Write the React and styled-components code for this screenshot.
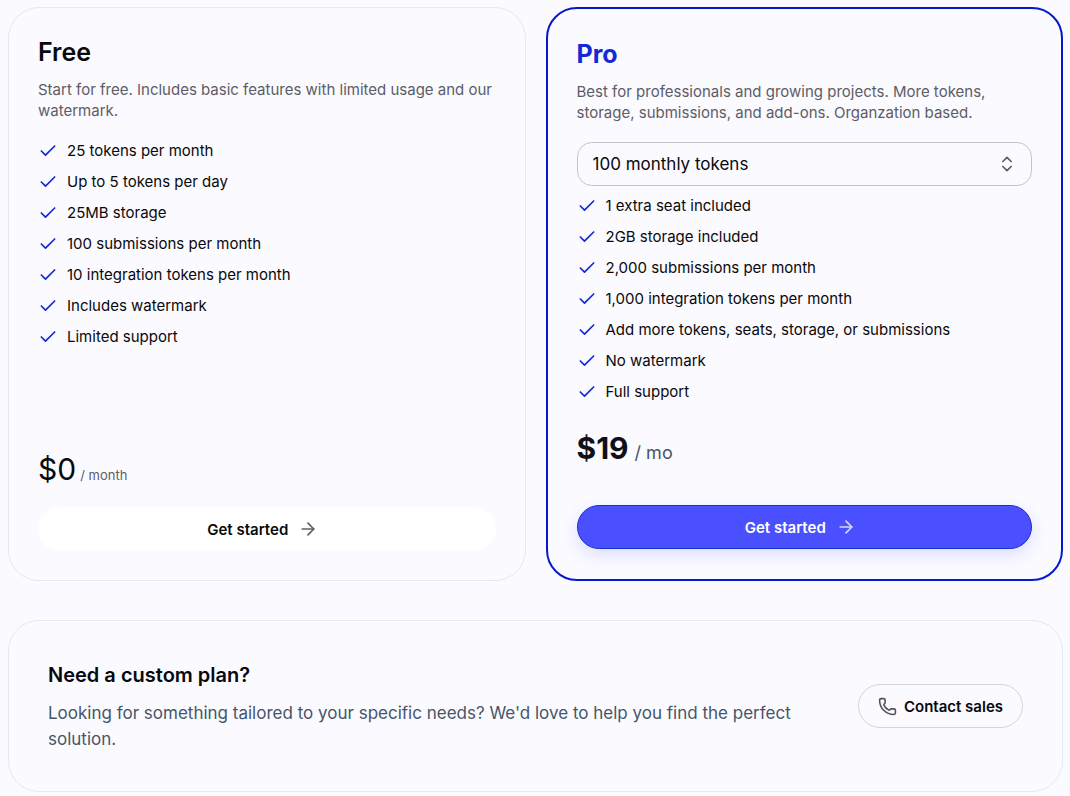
import React, { useState } from "react";
import styled, { createGlobalStyle, css } from "styled-components";
import { ArrowRight, Check, ChevronsUpDown, Phone } from "lucide-react";

const freeFeatures = [
  "25 tokens per month",
  "Up to 5 tokens per day",
  "25MB storage",
  "100 submissions per month",
  "10 integration tokens per month",
  "Includes watermark",
  "Limited support",
];

const proFeatures = [
  "1 extra seat included",
  "2GB storage included",
  "2,000 submissions per month",
  "1,000 integration tokens per month",
  "Add more tokens, seats, storage, or submissions",
  "No watermark",
  "Full support",
];

const FeatureList = ({ items }) => (
  <Features>
    {items.map((item) => (
      <Feature key={item}>
        <Check size={20} strokeWidth={2} />
        {item}
      </Feature>
    ))}
  </Features>
);

const App = () => {
  const [tokens, setTokens] = useState("100");

  return (
    <>
      <GlobalStyle />
      <Page>
        <Plans>
          <Card>
            <PlanName>Free</PlanName>
            <Description>
              Start for free. Includes basic features with limited usage and our
              watermark.
            </Description>
            <FeatureList items={freeFeatures} />
            <Price>
              <span>$0</span>
              <Period>/ month</Period>
            </Price>
            <PlanButton>
              Get started <ArrowRight size={20} strokeWidth={2} />
            </PlanButton>
          </Card>

          <Card $pro>
            <PlanName $pro>Pro</PlanName>
            <Description>
              Best for professionals and growing projects. More tokens, storage,
              submissions, and add-ons. Organzation based.
            </Description>
            <SelectWrapper>
              <Select
                aria-label="Monthly tokens"
                value={tokens}
                onChange={(e) => setTokens(e.target.value)}
              >
                <option value="100">100 monthly tokens</option>
              </Select>
              <ChevronsUpDown size={20} strokeWidth={2} />
            </SelectWrapper>
            <FeatureList items={proFeatures} />
            <Price $pro>
              <span>$19</span>
              <Period $pro>/ mo</Period>
            </Price>
            <PlanButton $pro>
              Get started <ArrowRight size={20} strokeWidth={2} />
            </PlanButton>
          </Card>
        </Plans>

        <CustomPlan>
          <CustomText>
            <CustomTitle>Need a custom plan?</CustomTitle>
            <CustomCopy>
              Looking for something tailored to your specific needs? We'd love
              to help you find the perfect solution.
            </CustomCopy>
          </CustomText>
          <ContactButton>
            <Phone size={19} strokeWidth={2} />
            Contact sales
          </ContactButton>
        </CustomPlan>
      </Page>
    </>
  );
};

export default App;

const GlobalStyle = createGlobalStyle`
  * {
    box-sizing: border-box;
  }
  body {
    margin: 0;
    background: #fafaff;
    color: #09090b;
    font-family: Inter, "Liberation Sans", sans-serif;
  }
`;

const Page = styled.main`
  padding: 7px 7px 5px 8px;
`;

const Plans = styled.div`
  display: grid;
  grid-template-columns: repeat(2, minmax(0, 1fr));
  gap: 20px;
`;

const Card = styled.section`
  display: flex;
  flex-direction: column;
  min-height: 574px;
  padding: 29px;
  border: 1px solid #e3e9f0;
  border-radius: 31px;

  ${({ $pro }) =>
    $pro &&
    css`
      padding: 30px 29px;
      border: 2px solid #0419cc;
    `}
`;

const PlanName = styled.h2`
  margin: 0 0 11px;
  font-size: 25px;
  line-height: 31px;
  font-weight: ${({ $pro }) => ($pro ? 700 : 600)};
  color: ${({ $pro }) => ($pro ? "#1527d6" : "#09090b")};
`;

const Description = styled.p`
  margin: 0 0 19px;
  font-size: 15px;
  line-height: 21px;
  color: #5c5d66;
`;

const Features = styled.ul`
  display: flex;
  flex-direction: column;
  gap: 10px;
  margin: 0 0 auto;
  padding: 0;
  list-style: none;
`;

const Feature = styled.li`
  display: flex;
  align-items: center;
  gap: 9px;
  font-size: 15px;
  line-height: 21px;

  svg {
    color: #1527d6;
  }
`;

const SelectWrapper = styled.div`
  position: relative;
  margin-bottom: 9px;

  svg {
    position: absolute;
    top: 12px;
    right: 15px;
    color: #5c5d66;
    pointer-events: none;
  }
`;

const Select = styled.select`
  appearance: none;
  display: block;
  width: 100%;
  height: 44px;
  padding: 0 40px 0 15px;
  border: 1px solid #c4c4cc;
  border-radius: 15px;
  background: transparent;
  color: #09090b;
  font-family: inherit;
  font-size: 17px;
`;

const Price = styled.p`
  display: flex;
  align-items: baseline;
  gap: 4px;
  margin: 0 0 14px;
  font-size: 30px;
  line-height: 36px;
  font-weight: 400;

  ${({ $pro }) =>
    $pro &&
    css`
      gap: 6px;
      margin-bottom: 34px;
      font-weight: 700;
      color: #101018;
    `}
`;

const Period = styled.span`
  font-size: ${({ $pro }) => ($pro ? "18px" : "13px")};
  font-weight: 400;
  color: ${({ $pro }) => ($pro ? "#475569" : "#5c5d66")};
`;

const PlanButton = styled.button`
  display: flex;
  align-items: center;
  justify-content: center;
  gap: 10px;
  height: 44px;
  padding: 0 16px 0 8px;
  border: none;
  border-radius: 22px;
  background: #ffffff;
  color: #09090b;
  font-family: inherit;
  font-size: 15px;
  font-weight: 600;
  cursor: pointer;

  svg {
    color: #5c5d66;
  }

  ${({ $pro }) =>
    $pro &&
    css`
      border: 1px solid #1830cf;
      background: #4a4fff;
      color: #ffffff;
      box-shadow: 0 6px 16px rgba(74, 79, 255, 0.16);

      svg {
        color: #d5d8ff;
      }
    `}
`;

const CustomPlan = styled.section`
  display: flex;
  align-items: center;
  justify-content: space-between;
  gap: 40px;
  margin-top: 39px;
  padding: 39px;
  border: 1px solid #e3e9f0;
  border-radius: 31px;
`;

const CustomText = styled.div`
  flex: 1;
  max-width: 770px;
`;

const CustomTitle = styled.h3`
  margin: 0 0 9px;
  font-size: 20px;
  line-height: 31px;
  font-weight: 600;
`;

const CustomCopy = styled.p`
  margin: 0;
  font-size: 17px;
  line-height: 26px;
  color: #475569;
`;

const ContactButton = styled.button`
  display: flex;
  align-items: center;
  gap: 7px;
  height: 44px;
  padding: 0 19px;
  border: 1px solid #d4d4da;
  border-radius: 22px;
  background: transparent;
  color: #09090b;
  font-family: inherit;
  font-size: 15px;
  font-weight: 600;
  white-space: nowrap;
  cursor: pointer;

  svg {
    color: #52525b;
  }
`;
